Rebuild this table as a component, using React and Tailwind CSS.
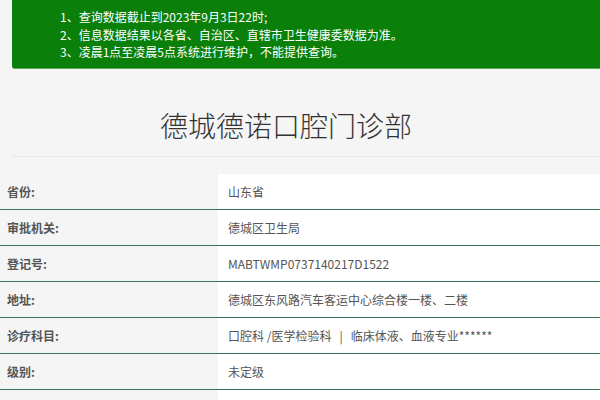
import React from 'react';

const notices = [
  '1、查询数据截止到2023年9月3日22时;',
  '2、信息数据结果以各省、自治区、直辖市卫生健康委数据为准。',
  '3、凌晨1点至凌晨5点系统进行维护，不能提供查询。',
];

const rows = [
  ['省份:', '山东省'],
  ['审批机关:', '德城区卫生局'],
  ['登记号:', 'MABTWMP0737140217D1522'],
  ['地址:', '德城区东风路汽车客运中心综合楼一楼、二楼'],
  ['诊疗科目:', '口腔科 /医学检验科\u00a0\u00a0\u00a0|\u00a0\u00a0\u00a0临床体液、血液专业******'],
  ['级别:', '未定级'],
  ['', ''],
];

const App = () => {
  return (
    <div
      className="w-[600px] h-[400px] overflow-hidden bg-[#f5f5f5]"
      style={{ fontFamily: '"Noto Sans CJK SC", "Noto Sans", sans-serif' }}
    >
      {/* Notice box */}
      <div className="ml-[12px] -mt-[4px] h-[73px] bg-[#0a800a] rounded-bl-[3px] border-b border-[#5aa85a] pl-[48px] pt-[12px] text-white text-[12px] leading-[17.5px]">
        {notices.map((n, i) => (
          <div key={i}>{n}</div>
        ))}
      </div>

      {/* Title */}
      <div className="pr-[28px] pt-[36px] pb-[11px] text-center text-[28px] leading-[40px] text-[#333] font-light">
        德城德诺口腔门诊部
      </div>
      <div className="ml-[12px] h-px bg-[#e8e8e8]"></div>

      {/* Info table */}
      <div className="mt-[17px]">
        {rows.map(([label, value], i) => (
          <div key={i} className="flex h-[36px] border-b border-[#3a7356]">
            <div className="w-[218px] flex items-center pl-[7px] text-[12px] font-bold text-[#555]">
              {label}
            </div>
            <div className="flex-1 bg-white flex items-center pl-[10px] text-[12px] text-[#555]">
              {value}
            </div>
          </div>
        ))}
      </div>
    </div>
  );
};

export default App;
